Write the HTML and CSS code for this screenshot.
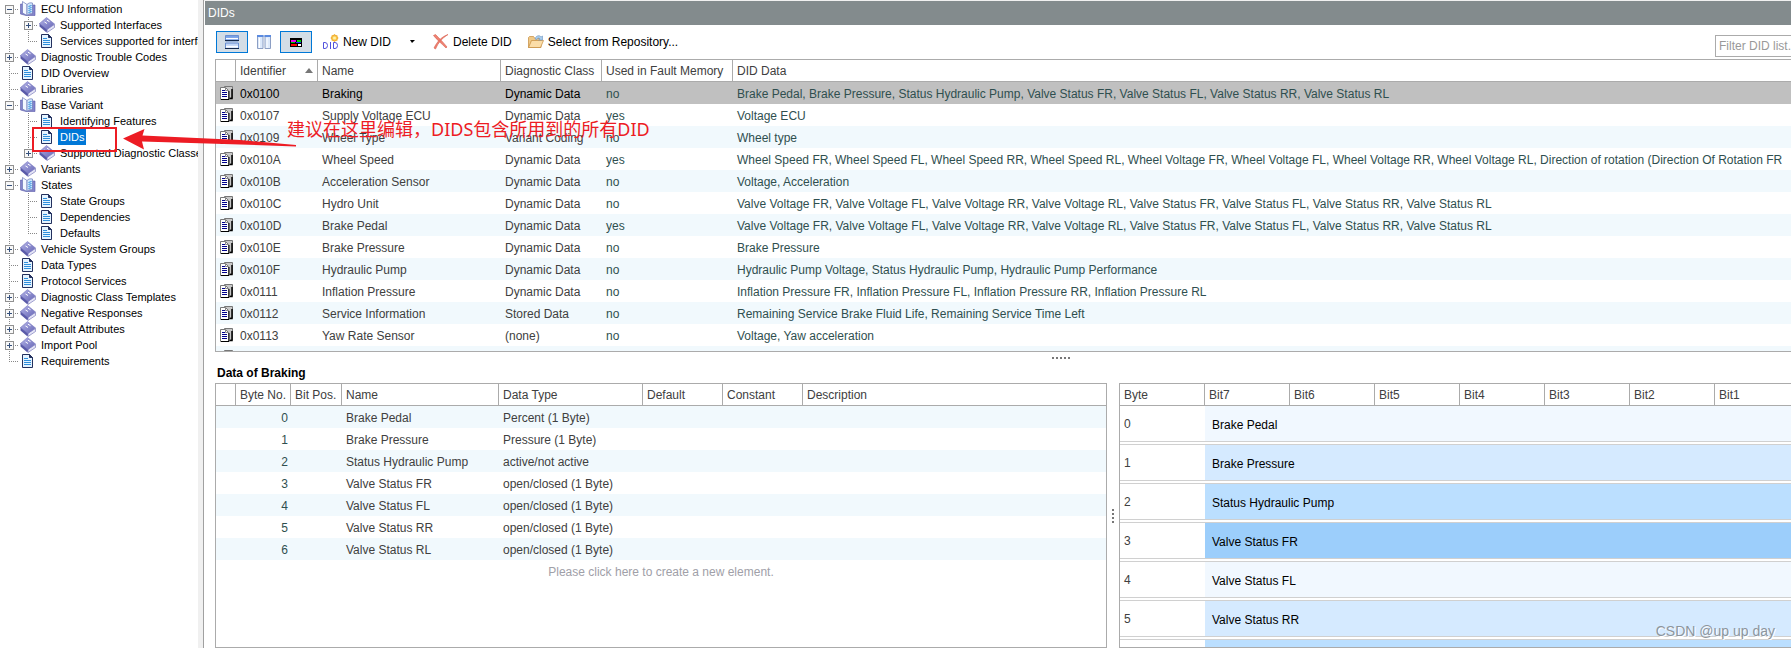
FILE: index.html
```html
<!DOCTYPE html>
<html lang="en">
<head>
    <meta charset="utf-8">
    <title>DIDs</title>
    <link rel="stylesheet" href="styles.css">
</head>
<body>
    <svg class="defs" aria-hidden="true">
        <linearGradient id="cover" x1="0" y1="0" x2="1" y2="1">
            <stop offset="0" stop-color="#b4b4e8"/>
            <stop offset="1" stop-color="#6464b4"/>
        </linearGradient>
        <linearGradient id="pane" x1="0" y1="0" x2="0" y2="1">
            <stop offset="0" stop-color="#6f9be6"/>
            <stop offset="1" stop-color="#e6f0ff"/>
        </linearGradient>
        <symbol id="page" viewBox="0 0 16 16">
            <path d="M2.5 1.5h7l3 3v10h-10z" fill="#e4f3ff" stroke="#23305e"/>
            <path d="M9.500 1.500v3h3z" fill="#23305e" stroke="#23305e"/>
            <path d="M4 5.500h4M4 7.500h7M4 9.500h7M4 11.500h7" stroke="#2f8fdc"/>
        </symbol>
        <symbol id="book" viewBox="0 0 16 16">
            <path d="M.5 6v3.500l7 6 1-3.500z" fill="#5a5aa8"/>
            <path d="M8 12v3.500l7.500-5V7.500z" fill="#e4e4f6" stroke="#6c6cb4" stroke-width=".6"/>
            <path d="M.5 6.500L7.500.500l8 6.500L8 12.500z" fill="url(#cover)" stroke="#7878c0" stroke-width=".6"/>
            <path d="M5.500 5l2.500 1.500M8 3.200l2.500 1.500" stroke="#fff"/>
        </symbol>
        <symbol id="open" viewBox="0 0 16 16">
            <path d="M.5 3h2v9l5 2 5-1V4H15v10.500H6L.5 13z" fill="#8484cc" stroke="#5c5ca8" stroke-width=".6"/>
            <path d="M2.500.500L7 3.500v11L2.500 12z" fill="#f4f8ff" stroke="#6c78b8" stroke-width=".7"/>
            <path d="M7 3.500C8.500 2 10 1.500 12.500 2v10.500c-2-.5-4 0-5.500 2z" fill="#cfe6fb" stroke="#6c78b8" stroke-width=".7"/>
            <path d="M8.500 5.500l3-1M8.500 7.500l3-1M8.500 9.500l3-1M8.500 11.500l3-1" stroke="#2f8fdc"/>
        </symbol>
        <symbol id="did" viewBox="0 0 13 14">
            <path d="M4.500 1v-.500h8V12H10" fill="#c8c8c8" stroke="#777"/>
            <path d="M12 3v9.500H9.500" fill="none" stroke="#000" stroke-width="1.500"/>
            <path d="M.5 1.500h5l3 3v9h-8z" fill="#fff" stroke="#777"/>
            <path d="M1 13.500h8V5" fill="none" stroke="#000"/>
            <path d="M5.500 2v2.500H8" fill="none" stroke="#888"/>
            <path d="M2 4.500h3M2 6.500h5M2 8.500h5M2 10.500h5" stroke="#00008b"/>
        </symbol>
    </svg>

    <div class="app">
        <nav class="sidebar">
            <ul class="tree">
                <li><i class="guide first"><button class="toggle minus" aria-label="Collapse"></button></i><svg class="icon"><use href="#open"/></svg><a href="#">ECU Information</a>
                <li><i class="guide line"></i><i class="guide"><button class="toggle plus" aria-label="Expand"></button></i><svg class="icon"><use href="#book"/></svg><a href="#">Supported Interfaces</a>
                <li><i class="guide line"></i><i class="guide last"></i><svg class="icon"><use href="#page"/></svg><a href="#">Services supported for interfa</a>
                <li><i class="guide"><button class="toggle plus" aria-label="Expand"></button></i><svg class="icon"><use href="#book"/></svg><a href="#">Diagnostic Trouble Codes</a>
                <li><i class="guide"></i><svg class="icon"><use href="#page"/></svg><a href="#">DID Overview</a>
                <li><i class="guide"></i><svg class="icon"><use href="#book"/></svg><a href="#">Libraries</a>
                <li><i class="guide"><button class="toggle minus" aria-label="Collapse"></button></i><svg class="icon"><use href="#open"/></svg><a href="#">Base Variant</a>
                <li><i class="guide line"></i><i class="guide"></i><svg class="icon"><use href="#page"/></svg><a href="#">Identifying Features</a>
                <li><i class="guide line"></i><i class="guide"></i><svg class="icon"><use href="#page"/></svg><a href="#" class="current">DIDs</a>
                <li><i class="guide line"></i><i class="guide last"><button class="toggle plus" aria-label="Expand"></button></i><svg class="icon"><use href="#book"/></svg><a href="#">Supported Diagnostic Classes</a>
                <li><i class="guide"><button class="toggle plus" aria-label="Expand"></button></i><svg class="icon"><use href="#book"/></svg><a href="#">Variants</a>
                <li><i class="guide"><button class="toggle minus" aria-label="Collapse"></button></i><svg class="icon"><use href="#open"/></svg><a href="#">States</a>
                <li><i class="guide line"></i><i class="guide"></i><svg class="icon"><use href="#page"/></svg><a href="#">State Groups</a>
                <li><i class="guide line"></i><i class="guide"></i><svg class="icon"><use href="#page"/></svg><a href="#">Dependencies</a>
                <li><i class="guide line"></i><i class="guide last"></i><svg class="icon"><use href="#page"/></svg><a href="#">Defaults</a>
                <li><i class="guide"><button class="toggle plus" aria-label="Expand"></button></i><svg class="icon"><use href="#book"/></svg><a href="#">Vehicle System Groups</a>
                <li><i class="guide"></i><svg class="icon"><use href="#page"/></svg><a href="#">Data Types</a>
                <li><i class="guide"></i><svg class="icon"><use href="#page"/></svg><a href="#">Protocol Services</a>
                <li><i class="guide"><button class="toggle plus" aria-label="Expand"></button></i><svg class="icon"><use href="#book"/></svg><a href="#">Diagnostic Class Templates</a>
                <li><i class="guide"><button class="toggle plus" aria-label="Expand"></button></i><svg class="icon"><use href="#book"/></svg><a href="#">Negative Responses</a>
                <li><i class="guide"><button class="toggle plus" aria-label="Expand"></button></i><svg class="icon"><use href="#book"/></svg><a href="#">Default Attributes</a>
                <li><i class="guide"><button class="toggle plus" aria-label="Expand"></button></i><svg class="icon"><use href="#book"/></svg><a href="#">Import Pool</a>
                <li><i class="guide last"></i><svg class="icon"><use href="#page"/></svg><a href="#">Requirements</a>
            </ul>
        </nav>

        <main class="main">
            <h1 class="title">DIDs</h1>
            <div class="content">
                <div class="toolbar">
                    <button class="tool pressed" aria-label="Horizontal split">
                        <svg width="14" height="14" viewBox="0 0 14 14"><path d="M.5.500h13v5.500H.5zM.5 8h13v5.500H.5z" fill="url(#pane)" stroke="#6a8fd0"/><path d="M0 5.500h14M0 13.500h14" stroke="#14284b"/><path d="M1 3.500h12M1 11.500h12" stroke="#fff"/></svg>
                    </button>
                    <button class="tool" aria-label="Vertical split">
                        <svg width="14" height="14" viewBox="0 0 14 14"><path d="M.5.500h5.500v13H.5zM8 .500h5.500v13H8z" fill="#dce9fb" stroke="#8c9fc4"/><path d="M0 1h6.500M7.500 1H14" stroke="#5b8be0" stroke-width="2"/><path d="M2.500 3v10M10 3v10" stroke="#fff"/></svg>
                    </button>
                    <button class="tool pressed" aria-label="Colors">
                        <svg width="12" height="9" viewBox="0 0 12 9"><path d="M0 0h12v9H0z" fill="#000"/><path d="M1 2h5v2H1z" fill="#e0e"/><path d="M7 2h4v2H7z" fill="#0d0"/><path d="M1 4h4v1H1z" fill="#0c0"/><path d="M6 4h5v1H6z" fill="#22f"/><path d="M1 6h6v2H1z" fill="#f00"/><path d="M8 6h3v2H8z" fill="#fff"/></svg>
                    </button>
                    <button class="action">
                        <svg width="16" height="16" viewBox="0 0 16 16"><path d="M.5 8.500v6h1.500q2.500 0 2.500-3t-2.500-3zM7.500 8v7M10.500 8.500v6h1.500q2.500 0 2.500-3t-2.500-3z" fill="none" stroke="#5050dc"/><circle cx="11.500" cy="4" r="3" fill="#ffd65a" stroke="#eda42c"/><path d="M11.500 0v8M7.500 4h8M8.800 1.200l5.500 5.500M14.300 1.200L8.800 6.800" stroke="#f5b93c" stroke-width=".8"/><circle cx="11.500" cy="4" r="1.500" fill="#fff2a8"/></svg>
                        New DID
                    </button>
                    <button class="caret" aria-label="More"></button>
                    <button class="action">
                        <svg width="16" height="16" viewBox="0 0 16 16"><path d="M.5 1.500l2-1C6 4 10 8 14 13l-1 1C8 9 4 6 .5 1.500z" fill="#ee8272" stroke="#d9604f" stroke-width=".6"/><path d="M15 .500C9 4 5 9 2.500 15L1 14C4 8 8 3 15 .500z" fill="#ee8272" stroke="#d9604f" stroke-width=".6"/></svg>
                        Delete DID
                    </button>
                    <button class="action">
                        <svg width="16" height="16" viewBox="0 0 16 16"><path d="M.5 13.500V3.500l1-1h4l1.500 2h6v9z" fill="#f0c987" stroke="#c48b3e" stroke-width=".7"/><path d="M.5 13.500l3-7h12l-3 7z" fill="#fbdda8" stroke="#c48b3e" stroke-width=".7"/><path d="M7 5c1-4 5-4 6-2l1.500-1v4h-4l1.500-1c-1-1.500-2.500-1-3 .5z" fill="#a9cdee" stroke="#6c94c0" stroke-width=".6"/></svg>
                        Select from Repository...
                    </button>
                    <input class="filter" type="text" placeholder="Filter DID list..." aria-label="Filter DID list">
                </div>

                <div class="panes">
                    <section class="frame">
                        <table class="grid dids">
                            <colgroup><col class="c-icon"><col class="c-id"><col class="c-name"><col class="c-class"><col class="c-used"><col></colgroup>
                            <thead>
                                <tr><th></th><th><span class="sorted">Identifier</span></th><th>Name</th><th>Diagnostic Class</th><th>Used in Fault Memory</th><th>DID Data</th></tr>
                            </thead>
                            <tbody>
                                <tr class="selected"><td><svg><use href="#did"/></svg></td><td>0x0100</td><td>Braking</td><td>Dynamic Data</td><td>no</td><td>Brake Pedal, Brake Pressure, Status Hydraulic Pump, Valve Status FR, Valve Status FL, Valve Status RR, Valve Status RL</td></tr>
                                <tr><td><svg><use href="#did"/></svg></td><td>0x0107</td><td>Supply Voltage ECU</td><td>Dynamic Data</td><td>yes</td><td>Voltage ECU</td></tr>
                                <tr><td><svg><use href="#did"/></svg></td><td>0x0109</td><td>Wheel Type</td><td>Variant Coding</td><td>no</td><td>Wheel type</td></tr>
                                <tr><td><svg><use href="#did"/></svg></td><td>0x010A</td><td>Wheel Speed</td><td>Dynamic Data</td><td>yes</td><td>Wheel Speed FR, Wheel Speed FL, Wheel Speed RR, Wheel Speed RL, Wheel Voltage FR, Wheel Voltage FL, Wheel Voltage RR, Wheel Voltage RL, Direction of rotation (Direction Of Rotation FR</td></tr>
                                <tr><td><svg><use href="#did"/></svg></td><td>0x010B</td><td>Acceleration Sensor</td><td>Dynamic Data</td><td>no</td><td>Voltage, Acceleration</td></tr>
                                <tr><td><svg><use href="#did"/></svg></td><td>0x010C</td><td>Hydro Unit</td><td>Dynamic Data</td><td>no</td><td>Valve Voltage FR, Valve Voltage FL, Valve Voltage RR, Valve Voltage RL, Valve Status FR, Valve Status FL, Valve Status RR, Valve Status RL</td></tr>
                                <tr><td><svg><use href="#did"/></svg></td><td>0x010D</td><td>Brake Pedal</td><td>Dynamic Data</td><td>yes</td><td>Valve Voltage FR, Valve Voltage FL, Valve Voltage RR, Valve Voltage RL, Valve Status FR, Valve Status FL, Valve Status RR, Valve Status RL</td></tr>
                                <tr><td><svg><use href="#did"/></svg></td><td>0x010E</td><td>Brake Pressure</td><td>Dynamic Data</td><td>no</td><td>Brake Pressure</td></tr>
                                <tr><td><svg><use href="#did"/></svg></td><td>0x010F</td><td>Hydraulic Pump</td><td>Dynamic Data</td><td>no</td><td>Hydraulic Pump Voltage, Status Hydraulic Pump, Hydraulic Pump Performance</td></tr>
                                <tr><td><svg><use href="#did"/></svg></td><td>0x0111</td><td>Inflation Pressure</td><td>Dynamic Data</td><td>no</td><td>Inflation Pressure FR, Inflation Pressure FL, Inflation Pressure RR, Inflation Pressure RL</td></tr>
                                <tr><td><svg><use href="#did"/></svg></td><td>0x0112</td><td>Service Information</td><td>Stored Data</td><td>no</td><td>Remaining Service Brake Fluid Life, Remaining Service Time Left</td></tr>
                                <tr><td><svg><use href="#did"/></svg></td><td>0x0113</td><td>Yaw Rate Sensor</td><td>(none)</td><td>no</td><td>Voltage, Yaw acceleration</td></tr>
                                <tr><td><svg><use href="#did"/></svg></td><td></td><td></td><td></td><td></td><td></td></tr>
                            </tbody>
                        </table>
                    </section>

                    <section class="detail">
                        <div class="splitter"><i></i><i></i><i></i><i></i><i></i></div>
                        <h2>Data of Braking</h2>
                        <div class="columns">
                            <div class="frame">
                                <table class="grid data">
                                    <colgroup><col class="c-icon"><col class="c-byte"><col class="c-bit"><col class="c-element"><col class="c-type"><col class="c-value"><col class="c-value"><col></colgroup>
                                    <thead>
                                        <tr><th></th><th>Byte No.</th><th>Bit Pos.</th><th>Name</th><th>Data Type</th><th>Default</th><th>Constant</th><th>Description</th></tr>
                                    </thead>
                                    <tbody>
                                        <tr><td></td><td>0</td><td></td><td>Brake Pedal</td><td>Percent (1 Byte)</td><td></td><td></td><td></td></tr>
                                        <tr><td></td><td>1</td><td></td><td>Brake Pressure</td><td>Pressure (1 Byte)</td><td></td><td></td><td></td></tr>
                                        <tr><td></td><td>2</td><td></td><td>Status Hydraulic Pump</td><td>active/not active</td><td></td><td></td><td></td></tr>
                                        <tr><td></td><td>3</td><td></td><td>Valve Status FR</td><td>open/closed (1 Byte)</td><td></td><td></td><td></td></tr>
                                        <tr><td></td><td>4</td><td></td><td>Valve Status FL</td><td>open/closed (1 Byte)</td><td></td><td></td><td></td></tr>
                                        <tr><td></td><td>5</td><td></td><td>Valve Status RR</td><td>open/closed (1 Byte)</td><td></td><td></td><td></td></tr>
                                        <tr><td></td><td>6</td><td></td><td>Valve Status RL</td><td>open/closed (1 Byte)</td><td></td><td></td><td></td></tr>
                                    </tbody>
                                    <tfoot>
                                        <tr><td colspan="8">Please click here to create a new element.</td></tr>
                                    </tfoot>
                                </table>
                            </div>
                            <div class="splitter vertical"><i></i><i></i><i></i><i></i></div>
                            <div class="frame">
                                <table class="grid bits">
                                    <colgroup><col class="c-cell"><col class="c-cell"><col class="c-cell"><col class="c-cell"><col class="c-cell"><col class="c-cell"><col class="c-cell"><col></colgroup>
                                    <thead>
                                        <tr><th>Byte</th><th>Bit7</th><th>Bit6</th><th>Bit5</th><th>Bit4</th><th>Bit3</th><th>Bit2</th><th>Bit1</th></tr>
                                    </thead>
                                    <tbody>
                                        <tr><td>0</td><td colspan="7" class="shade1">Brake Pedal</td></tr>
                                        <tr class="gap"><td colspan="8"></td></tr>
                                        <tr><td>1</td><td colspan="7" class="shade2">Brake Pressure</td></tr>
                                        <tr class="gap"><td colspan="8"></td></tr>
                                        <tr><td>2</td><td colspan="7" class="shade3">Status Hydraulic Pump</td></tr>
                                        <tr class="gap"><td colspan="8"></td></tr>
                                        <tr><td>3</td><td colspan="7" class="shade4">Valve Status FR</td></tr>
                                        <tr class="gap"><td colspan="8"></td></tr>
                                        <tr><td>4</td><td colspan="7" class="shade1">Valve Status FL</td></tr>
                                        <tr class="gap"><td colspan="8"></td></tr>
                                        <tr><td>5</td><td colspan="7" class="shade2">Valve Status RR</td></tr>
                                        <tr class="gap"><td colspan="8"></td></tr>
                                        <tr><td></td><td colspan="7" class="shade3"></td></tr>
                                    </tbody>
                                </table>
                            </div>
                        </div>
                    </section>
                </div>
            </div>
        </main>
    </div>

    <!-- notes drawn over the window -->
    <svg class="marker" width="300" height="160" viewBox="0 0 300 160" aria-hidden="true">
        <path d="M33 128h83v23H33z" fill="none" stroke="#ed1c24" stroke-width="2"/>
        <path d="M123 138.500L144.500 129l-2 6.500L240 140l56 5v1.500l-56-2-98-3 2 8z" fill="#ed1c24"/>
    </svg>
    <p class="note">建议在这里编辑，DIDS包含所用到的所有DID</p>
    <p class="watermark">CSDN @up up day</p>
</body>
</html>
```
FILE: styles.css
```css
* {
    box-sizing: border-box;
}
body {
    margin: 0;
    font: 12px/16px "Liberation Sans", Arial, sans-serif;
    color: #404040;
    background: #fff;
    overflow: hidden;
}
h1, h2, p, ul {
    margin: 0;
    padding: 0;
}
button {
    font: inherit;
    color: #000;
    background: none;
    border: none;
    padding: 0;
}
.defs {
    display: block;
    width: 0;
    height: 0;
}
.app {
    display: flex;
    height: 100vh;
}

/* navigation tree */
.sidebar {
    flex: 0 0 204px;
    min-width: 0;
    padding-top: 1px;
    border-right: 1px solid #a0a0a0;
    box-shadow: inset -5px 0 #f0f0f0;
}
.tree {
    list-style: none;
    font-size: 11px;
    margin-right: 5px;
    overflow: hidden;
}
.tree li {
    display: flex;
    height: 16px;
    white-space: nowrap;
}
.tree a {
    color: #000;
    text-decoration: none;
    margin-left: 3px;
    padding: 0 2px;
}
.tree a.current {
    color: #fff;
    background: #0078d7;
}
.icon {
    flex: 0 0 16px;
    height: 16px;
}
.guide {
    --v: repeating-linear-gradient(#888 0 1px, transparent 1px 2px);
    --h: repeating-linear-gradient(90deg, #888 0 1px, transparent 1px 2px);
    flex: 0 0 19px;
    height: 16px;
    padding: 4px 0 0 5px;
    background: var(--v) 9px 0 / 1px 16px no-repeat, var(--h) 9px 8px / 10px 1px no-repeat;
}
.guide.line {
    background: var(--v) 9px 0 / 1px 16px no-repeat;
}
.guide.first {
    background: var(--v) 9px 8px / 1px 8px no-repeat, var(--h) 9px 8px / 10px 1px no-repeat;
}
.guide.last {
    background: var(--v) 9px 0 / 1px 8px no-repeat, var(--h) 9px 8px / 10px 1px no-repeat;
}
.guide + .icon {
    margin-left: 1px;
}
.toggle {
    display: block;
    width: 9px;
    height: 9px;
    border: 1px solid #919191;
    background: linear-gradient(#35507c, #35507c) center / 5px 1px no-repeat, #f8f8f8;
}
.toggle.plus {
    background: linear-gradient(#35507c, #35507c) center / 5px 1px no-repeat, linear-gradient(#35507c, #35507c) center / 1px 5px no-repeat, #f8f8f8;
}

/* main window */
.main {
    flex: 1;
    min-width: 0;
    display: flex;
    flex-direction: column;
    padding-left: 1px;
    border-top: 1px solid #f0f0f0;
}
.title {
    height: 24px;
    padding-left: 3px;
    font-size: 12px;
    font-weight: normal;
    line-height: 24px;
    color: #fff;
    background: #838b8d;
}
.content {
    flex: 1;
    min-height: 0;
    display: flex;
    flex-direction: column;
    padding-left: 10px;
}
.toolbar {
    display: flex;
    align-items: flex-start;
    height: 34px;
    padding: 6px 0 0 1px;
}
.tool {
    display: flex;
    align-items: center;
    justify-content: center;
    width: 32px;
    height: 22px;
}
.tool.pressed {
    background: #d3dde6;
    border: 1px solid #0078d7;
}
.action {
    display: flex;
    align-items: center;
    gap: 4px;
    height: 22px;
    margin-right: 16px;
}
.tool + .action {
    margin-left: 11px;
}
.caret {
    width: 9px;
    height: 22px;
    margin: 0 16px 0 1px;
    background: #000;
    clip-path: polygon(2px 9px, 7px 9px, 4px 12px);
}
.filter {
    width: 76px;
    height: 22px;
    margin-top: 4px;
    margin-left: auto;
    padding: 0 0 0 3px;
    font: inherit;
    border: 1px solid #ababab;
    border-right: none;
    outline: none;
}
.filter::placeholder {
    color: #999;
}
.panes {
    flex: 1;
    min-height: 0;
    display: grid;
    grid-template-rows: 293fr 296fr;
}
.frame {
    min-width: 0;
    min-height: 0;
    border: 1px solid #ababab;
    overflow: hidden;
}
.frame:last-child, .panes > .frame {
    border-right: none;
}
.detail {
    min-height: 0;
    display: flex;
    flex-direction: column;
}
h2 {
    margin: 0 0 2px 2px;
    font-size: 12px;
    line-height: 16px;
    color: #000;
}
.columns {
    flex: 1;
    min-height: 0;
    display: grid;
    grid-template-columns: 892fr 12px 672fr;
}
.splitter {
    display: flex;
    justify-content: center;
    gap: 2px;
    height: 13px;
    padding: 5px 0 0 116px;
}
.splitter i {
    width: 2px;
    height: 2px;
    background: #777;
}
.splitter.vertical {
    flex-direction: column;
    align-items: center;
    height: auto;
    padding: 0;
}

/* tables */
.grid {
    width: 100%;
    table-layout: fixed;
    border-collapse: separate;
    border-spacing: 0;
}
.grid th, .grid td {
    height: 22px;
    padding: 0 4px;
    text-align: left;
    font-weight: normal;
    white-space: nowrap;
    overflow: hidden;
}
.grid td {
    padding-top: 2px;
}
.grid th {
    border-right: 1px solid #ababab;
    border-bottom: 1px solid #ababab;
}
.grid th:last-child {
    border-right: none;
}
.c-icon { width: 20px; }
.c-id { width: 82px; }
.c-name { width: 183px; }
.c-class { width: 101px; }
.c-used { width: 131px; }
.c-byte { width: 55px; }
.c-bit { width: 51px; }
.c-element { width: 157px; }
.c-type { width: 144px; }
.c-value { width: 80px; }
.c-cell { width: 85px; }
.sorted {
    display: flex;
    align-items: center;
    justify-content: space-between;
}
.sorted::after {
    content: "";
    border: 4px solid transparent;
    border-top: none;
    border-bottom: 5px solid #777;
}
.dids tbody tr:nth-child(odd), .data tbody tr:nth-child(odd) {
    background: #f1f9fd;
}
.dids td:first-child {
    padding-top: 0;
}
.dids svg {
    display: block;
    width: 13px;
    height: 14px;
}
.dids td:nth-child(n+5), .data td:nth-child(2) {
    color: #2f4f4f;
}
.dids tbody tr.selected {
    background: #c0c0c0;
}
.selected td:nth-child(-n+4) {
    color: #000;
}
.data td:nth-child(2) {
    text-align: right;
    padding-right: 3px;
}
.data tfoot td {
    text-align: center;
    color: #a0a0a8;
}
.bits tbody td {
    height: 35px;
    padding-top: 0;
}
.bits tbody td + td {
    padding: 3px 7px 0;
    color: #000;
}
.bits .gap td {
    height: 4px;
    padding: 0;
    border-top: 1px solid #d0d0d0;
    border-bottom: 1px solid #d0d0d0;
}
.shade1 { background: #f1f8ff; }
.shade2 { background: #d5eaff; }
.shade3 { background: #bbdfff; }
.shade4 { background: #9ccefb; }

/* overlays */
.marker {
    position: absolute;
    top: 0;
    left: 0;
    pointer-events: none;
}
.note {
    position: absolute;
    top: 117px;
    left: 287px;
    font: 18px/24px "Noto Sans", "Noto Sans CJK SC", sans-serif;
    color: #ed1c24;
    white-space: nowrap;
}
.watermark {
    position: absolute;
    right: 16px;
    bottom: 8px;
    font-size: 14px;
    line-height: 18px;
    color: #8d959d;
    text-shadow: 1px 1px #fff;
}
```
